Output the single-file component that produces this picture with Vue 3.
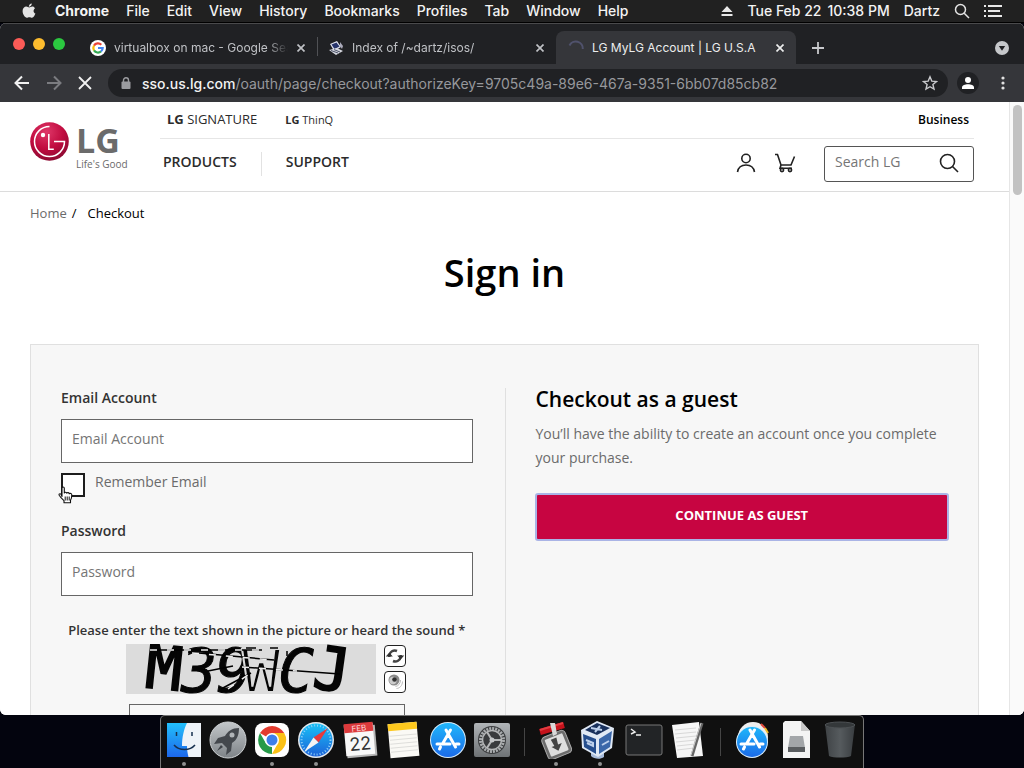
<script setup>
import { ref } from 'vue'

const menus = ['Chrome', 'File', 'Edit', 'View', 'History', 'Bookmarks', 'Profiles', 'Tab', 'Window', 'Help']
const tabs = [
  { title: 'virtualbox on mac - Google Search', icon: 'google', active: false },
  { title: 'Index of /~dartz/isos/', icon: 'debian', active: false },
  { title: 'LG MyLG Account | LG U.S.A', icon: 'spinner', active: true },
]
const dock = [
  { name: 'finder', running: true },
  { name: 'launchpad' },
  { name: 'chrome', running: true },
  { name: 'safari', running: true },
  { name: 'calendar' },
  { name: 'notes' },
  { name: 'appstore' },
  { name: 'preferences' },
  { name: 'sep' },
  { name: 'automator', running: true },
  { name: 'virtualbox', running: true },
  { name: 'terminal' },
  { name: 'textedit' },
  { name: 'sep' },
  { name: 'downloads' },
  { name: 'diskimage' },
  { name: 'trash' },
]
const email = ref('')
const password = ref('')
const captcha = ref('')
const query = ref('')
const remember = ref(false)
</script>

<template>
  <div class="desktop">
    <header class="menubar">
      <button class="apple" aria-label="Apple menu">
        <svg width="14" height="16" viewBox="0 0 14 16"><path fill="#e4e4e4" d="M9.8 0.4c.1 1.700-1.400 3.300-3 3.300C6.600 2.100 8.200.600 9.800.400zM12.900 5.400c-1.900 1.200-1.700 4.200.500 5.100-.500 1.500-1.900 4.300-3.400 4.300-1 0-1.400-.600-2.600-.600s-1.700.600-2.600.600C3 14.800.600 11.300.600 8.100c0-3 1.900-4.500 3.700-4.500 1.200 0 2.200.800 2.900.800.700 0 1.800-.900 3.200-.900 1 0 2 .600 2.500 1.900z"/></svg>
      </button>
      <button v-for="m in menus" :key="m" :class="{ app: m === 'Chrome' }">{{ m }}</button>
      <div class="status">
        <svg width="12" height="12" viewBox="0 0 12 12"><path fill="#e8e8e8" d="M6 1l5.500 6H.5zM.5 9h11v2H.5z"/></svg>
        <span class="clock"><span>Tue Feb 22</span><span>10:38 PM</span></span>
        <span>Dartz</span>
        <svg width="16" height="16" viewBox="0 0 16 16" fill="none" stroke="#e4e4e4" stroke-width="1.500"><circle cx="6.500" cy="6.500" r="5"/><path d="M10.200 10.200L15 15"/></svg>
        <svg width="18" height="12" viewBox="0 0 18 12" fill="#e8e8e8"><path d="M0 0h2v2H0zM0 5h2v2H0zM0 10h2v2H0zM4 0h14v2H4zM4 5h12v2H4zM4 10h14v2H4z"/></svg>
      </div>
    </header>

    <main class="window">
      <div class="tabstrip">
        <div class="lights"><i class="red"></i><i class="yellow"></i><i class="green"></i></div>
        <div v-for="t in tabs" :key="t.title" class="tab" :class="{ active: t.active }">
          <svg v-if="t.icon === 'google'" width="16" height="16" viewBox="0 0 16 16"><circle cx="8" cy="8" r="8" fill="#fff"/><g fill="none" stroke-width="2.200"><path d="M11.300 4.700A4.700 4.700 0 0 0 4 5.600" stroke="#ea4335"/><path d="M4 5.600a4.700 4.700 0 0 0 0 4.800" stroke="#fbbc05"/><path d="M4 10.400a4.700 4.700 0 0 0 7 1" stroke="#34a853"/><path d="M11 11.400A4.700 4.700 0 0 0 12.700 8H8" stroke="#4285f4"/></g></svg>
          <svg v-else-if="t.icon === 'debian'" width="16" height="16" viewBox="0 0 16 16"><path fill="#e2e4ef" d="M2 4l7-3 4 6-7 4z"/><path fill="#27346b" d="M3.500 4.500l5-2 3 4-5 2.500z"/><path fill="#d5d7df" d="M1 10l8-2 6 3-7 4z"/><path stroke="#4c5268" d="M3 10.500l7 2.500M6 9.600l6 2.400"/><path fill="#aab" d="M12 2l3 4-1 3-2-3z"/></svg>
          <svg v-else width="16" height="16" viewBox="0 0 16 16" fill="none" stroke="#50526c" stroke-width="2"><path d="M1.500 5.500A7 7 0 0 1 14.800 9"/></svg>
          <span class="title">{{ t.title }}</span>
          <button class="close" aria-label="Close tab"><svg width="8" height="8" viewBox="0 0 8 8" stroke="currentColor" stroke-width="1.700"><path d="M.5.500l7 7M7.500.500l-7 7"/></svg></button>
        </div>
        <button class="newtab" aria-label="New tab"><svg width="12" height="12" viewBox="0 0 12 12" stroke="#c8c9cc" stroke-width="1.800"><path d="M6 0v12M0 6h12"/></svg></button>
        <button class="tabsearch" aria-label="Search tabs"><svg width="14" height="14" viewBox="0 0 14 14"><circle cx="7" cy="7" r="7" fill="#c6c8cb"/><path fill="#202124" d="M3.800 5h6.400L7 9.800z"/></svg></button>
      </div>

      <div class="toolbar">
        <button aria-label="Back"><svg width="16" height="16" viewBox="0 0 16 16" fill="none" stroke="#f1f1f1" stroke-width="2"><path d="M15 8H2M8 1.500L1.500 8 8 14.500"/></svg></button>
        <button aria-label="Forward"><svg width="16" height="16" viewBox="0 0 16 16" fill="none" stroke="#7b7c80" stroke-width="2"><path d="M1 8h13M8 1.500L14.500 8 8 14.500"/></svg></button>
        <button aria-label="Stop"><svg width="14" height="14" viewBox="0 0 14 14" stroke="#f1f1f1" stroke-width="1.800"><path d="M1 1l12 12M13 1L1 13"/></svg></button>
        <div class="omnibox">
          <svg width="10" height="12" viewBox="0 0 10 12"><rect x="0.500" y="4.500" width="9" height="7.500" rx="1" fill="#9b9ca0"/><path d="M2.500 5V3.300a2.500 2.500 0 0 1 5 0V5" fill="none" stroke="#9b9ca0" stroke-width="1.400"/></svg>
          <span class="url"><b>sso.us.lg.com</b>/oauth/page/checkout?authorizeKey=9705c49a-89e6-467a-9351-6bb07d85cb82</span>
          <button aria-label="Bookmark this page"><svg width="16" height="16" viewBox="0 0 16 16" fill="none" stroke="#c8c9cc" stroke-width="1.400"><path d="M8 1.800l1.800 4.300 4.700.4-3.600 3 1.100 4.600L8 11.700l-4 2.400 1.100-4.600-3.600-3 4.700-.4z"/></svg></button>
        </div>
        <button class="profile" aria-label="Profile"><svg width="12" height="12" viewBox="0 0 12 12" fill="#fff"><circle cx="6" cy="3" r="3"/><path d="M0 12V10.500C0 8.500 3 7.300 6 7.300s6 1.200 6 3.200V12z"/></svg></button>
        <button class="more" aria-label="More"><svg width="4" height="14" viewBox="0 0 4 14" fill="#e2e2e2"><circle cx="2" cy="2" r="1.600"/><circle cx="2" cy="7" r="1.600"/><circle cx="2" cy="12" r="1.600"/></svg></button>
      </div>

      <div class="viewport">
        <div class="page">
          <div class="site-header">
            <a href="#" class="logo" aria-label="LG home">
              <svg width="39" height="39" viewBox="0 0 39 39"><defs><radialGradient id="lgface" cx="42%" cy="25%" r="80%"><stop offset="0" stop-color="#df3768"/><stop offset=".55" stop-color="#c00b3f"/><stop offset="1" stop-color="#850a30"/></radialGradient></defs><circle cx="19.500" cy="19.500" r="19.300" fill="url(#lgface)"/><g fill="none" stroke="#fff" stroke-width="1.500"><path d="M19.500 4.500A15 15 0 1 0 34.500 19.500H24"/><path d="M18.800 12v15.200h5"/></g><circle cx="13" cy="13" r="2.200" fill="#fff"/></svg>
              <span class="wordmark"><strong>LG</strong><small>Life's Good</small></span>
            </a>
            <div class="header-main">
              <div class="toprow">
                <a href="#" class="signature"><b>LG</b> SIGNATURE</a>
                <a href="#" class="thinq"><b>LG</b> ThinQ</a>
                <a href="#" class="business">Business</a>
              </div>
              <nav class="navrow">
                <a href="#">PRODUCTS</a>
                <a href="#" class="support">SUPPORT</a>
                <button class="account" aria-label="My account"><svg width="20" height="20" viewBox="0 0 20 20" fill="none" stroke="#222" stroke-width="1.600"><circle cx="10" cy="5.500" r="4.200"/><path d="M1.500 19c.8-4.700 4-7 8.500-7s7.700 2.300 8.500 7"/></svg></button>
                <button aria-label="Cart"><svg width="22" height="20" viewBox="0 0 22 20" fill="none" stroke="#222" stroke-width="1.600"><path d="M1 1.500h2.500L7 12h10l3.500-8.500M7 12l-1 3.200h12"/><circle cx="8" cy="17" r="1.600"/><circle cx="16" cy="17" r="1.600"/></svg></button>
                <div class="search">
                  <input v-model="query" type="text" placeholder="Search LG" aria-label="Search LG">
                  <button aria-label="Search"><svg width="20" height="20" viewBox="0 0 20 20" fill="none" stroke="#222" stroke-width="1.600"><circle cx="8.500" cy="8.500" r="7"/><path d="M13.500 13.500L19 19"/></svg></button>
                </div>
              </nav>
            </div>
          </div>

          <nav class="crumbs"><a href="#">Home</a><span>/</span><span class="here">Checkout</span></nav>
          <h1>Sign in</h1>

          <section class="panel">
            <form class="signin" @submit.prevent>
              <label class="field" for="email">Email Account</label>
              <input id="email" v-model="email" class="box" type="text" placeholder="Email Account">
              <div class="remember">
                <input id="remember" v-model="remember" type="checkbox">
                <label for="remember">Remember Email</label>
                <svg class="cursor" width="16" height="18" viewBox="0 0 16 18"><path fill="#fff" stroke="#111" stroke-width="1.100" stroke-linejoin="round" d="M4 10.500V2.200C4 .5 6.300.5 6.300 2.200V7c.5-1.200 2.400-1 2.500.2.600-1 2.300-.8 2.500.6.800-.8 2.500-.4 2.500 1.200 0 2.300-.3 3.500-1.300 5.200v2.600H6v-2.200C4.500 13 3 12 1.200 9.200.500 8 2 7.200 3 8.200z"/><path stroke="#111" d="M7.200 10.500v4M9.200 10.500v4M11.200 10.500v4"/></svg>
              </div>
              <label class="field" for="password">Password</label>
              <input id="password" v-model="password" class="box" type="password" placeholder="Password">
              <label class="captcha-label" for="captcha">Please enter the text shown in the picture or heard the sound *</label>
              <div class="captcha">
                <svg width="250" height="50" viewBox="0 0 250 50">
                  <rect width="250" height="50" fill="#dcdcdc"/>
                  <g font-family="DejaVu Sans Mono" font-size="60" fill="#050505" stroke="#050505" stroke-width="1">
                    <text x="20" y="45" transform="rotate(6 38 25)" stroke-width="2">M</text>
                    <text x="55" y="48" font-style="oblique">3</text>
                    <text x="90" y="48" font-style="oblique">9</text>
                    <text x="116" y="48" font-family="Liberation Mono" font-size="64" stroke="#dcdcdc" stroke-width="2">W</text>
                    <text x="152" y="48" font-style="oblique">C</text>
                    <text x="188" y="46" transform="rotate(8 205 25)" stroke-width="2">J</text>
                  </g>
                  <g fill="none" stroke-width="1.500"><path stroke="#000" d="M24 6h112M62 8l86 8M82 27l25-5M116 23l98 7M95 45l30-16M161 7v5M120 4h10M144 4h8"/><path stroke="#eee" stroke-dasharray="7 10" d="M24 6h112M66 9l80 7M116 23l55 4M102 45l24-17"/></g>
                </svg>
                <div class="captcha-tools">
                  <button aria-label="New picture"><svg width="20" height="20" viewBox="0 0 20 20"><g fill="none" stroke="#444" stroke-width="2.500"><path d="M4.300 11V9.500A5.500 5.500 0 0 1 12 5"/><path d="M15.700 9v1.500A5.500 5.500 0 0 1 8 15"/></g><path fill="#333" d="M.8 10.500h7l-3.500-4zM12.200 9.500h7l-3.500 4z"/></svg></button>
                  <button aria-label="Play sound"><svg width="20" height="20" viewBox="0 0 20 20"><circle cx="9" cy="8" r="5.500" fill="#8a8a8a"/><circle cx="8" cy="8.500" r="3.700" fill="#ccc"/><circle cx="9.500" cy="7.500" r="2.300" fill="#333"/><g fill="none" stroke="#bbb"><path d="M15.500 8c0 3.500-2 6-5 6.500M17.500 9.500c0 4-3 7-6 7"/></g></svg></button>
                </div>
              </div>
              <input id="captcha" v-model="captcha" class="box captcha-input" type="text">
            </form>
            <div class="guest">
              <h2>Checkout as a guest</h2>
              <p>You’ll have the ability to create an account once you complete your purchase.</p>
              <button>CONTINUE AS GUEST</button>
            </div>
          </section>
        </div>
        <div class="scrollbar"><i></i></div>
      </div>
    </main>

    <footer class="dock">
      <div v-for="(d, i) in dock" :key="i" :class="d.name === 'sep' ? 'sep' : 'cell'">
        <svg v-if="d.name === 'finder'" width="38" height="38" viewBox="0 0 38 38"><defs><linearGradient id="fin" x2="0" y2="1"><stop stop-color="#22c0fb"/><stop offset="1" stop-color="#1d67ea"/></linearGradient></defs><path fill="url(#fin)" d="M2 2h34v34H2z"/><path fill="#eef3f8" d="M22 2h14v34H23.500c-1-4-1.500-7-1.500-11h-5c0-9 2-17 5-23z"/><g fill="none" stroke="#17304f" stroke-width="1.500"><path d="M11.500 11v4M27 11v4M9 24c5 6 16 6 21 0"/></g></svg>
        <svg v-else-if="d.name === 'launchpad'" width="38" height="38" viewBox="0 0 38 38"><defs><linearGradient id="lp" x2="0" y2="1"><stop stop-color="#c3c7ca"/><stop offset="1" stop-color="#7e8387"/></linearGradient></defs><circle cx="19" cy="19" r="18" fill="url(#lp)" stroke="#cdd0d2"/><path fill="#44484d" d="M30 7c-7 0-11 3-14 8l-7 2-4 6 8-1 5 5-1 7 5-4 1-8c5-3 7-8 7-15z"/><circle cx="23" cy="14" r="2.500" fill="#b1b5b8"/><path fill="#3d4146" d="M12 24l-4 6 6-4z"/></svg>
        <svg v-else-if="d.name === 'chrome'" width="38" height="38" viewBox="0 0 38 38"><rect x="2" y="2" width="34" height="34" rx="8" fill="#fff"/><path fill="#e33b2e" d="M19 19L7 12a14 14 0 0 1 24.200 0z"/><path fill="#fbc116" d="M19 12h12.200A14 14 0 0 1 19 33l6-11z"/><path fill="#269a49" d="M7 12l6 10.500L19 26v7A14 14 0 0 1 7 12z"/><circle cx="19" cy="19" r="7" fill="#fff"/><circle cx="19" cy="19" r="5.500" fill="#3e7fea"/></svg>
        <svg v-else-if="d.name === 'safari'" width="38" height="38" viewBox="0 0 38 38"><defs><linearGradient id="sf" x2="0" y2="1"><stop stop-color="#19c1f7"/><stop offset="1" stop-color="#1c62d8"/></linearGradient></defs><circle cx="19" cy="19" r="18" fill="#e5e9ed"/><circle cx="19" cy="19" r="16.500" fill="url(#sf)"/><circle cx="19" cy="19" r="14.500" fill="none" stroke="#8fd0f8" stroke-width="2" stroke-dasharray="1 2"/><path fill="#e8393c" d="M31 7L21.500 21.500l-5-5z"/><path fill="#f4f4f4" d="M7 31l9.500-14.500 5 5z"/></svg>
        <svg v-else-if="d.name === 'calendar'" width="38" height="38" viewBox="0 0 38 38"><g transform="rotate(-5 19 19)"><path fill="#b5b5b5" d="M5 5h30v31H5z"/><path fill="#f8f8f8" d="M4 3h29v31H4z"/><path fill="#dc3a3c" d="M4 2h29v9H4z"/><text x="19" y="10" font-size="8" fill="#fbdcdc" text-anchor="middle" font-family="Inter">FEB</text><text x="19" y="29" font-size="18" fill="#333" text-anchor="middle" font-family="Inter">22</text></g></svg>
        <svg v-else-if="d.name === 'notes'" width="38" height="38" viewBox="0 0 38 38"><g transform="rotate(-5 19 19)"><path fill="#faf9f5" d="M4 2h29v34H4z"/><path fill="#fdc81e" d="M4 2h29v7H4z"/><path stroke="#dededb" d="M5 14h27M5 18h27M5 22h27M5 26h27M5 30h27"/></g></svg>
        <svg v-else-if="d.name === 'appstore' || d.name === 'downloads'" width="38" height="38" viewBox="0 0 38 38"><defs><linearGradient id="as" x2="0" y2="1"><stop stop-color="#20b7fa"/><stop offset="1" stop-color="#1b6be9"/></linearGradient></defs><g v-if="d.name === 'downloads'"><circle cx="20" cy="16" r="15" fill="#eee"/><path stroke="#e34a3c" stroke-width="2" d="M28 3l4 4"/><path stroke="#f0bd2a" stroke-width="2" d="M32 7l3 5"/></g><circle cx="19" :cy="d.name === 'downloads' ? 21 : 19" :r="d.name === 'downloads' ? 16 : 18" fill="#d9edfb"/><circle cx="19" :cy="d.name === 'downloads' ? 21 : 19" :r="d.name === 'downloads' ? 15 : 17" fill="url(#as)"/><path fill="none" stroke="#fff" stroke-width="3" stroke-linecap="round" d="M17 9l9.500 17M21.500 9L14 22M11.500 26l-1 2M8 23h13M27 23h3"/></svg>
        <svg v-else-if="d.name === 'preferences'" width="38" height="38" viewBox="0 0 38 38"><defs><linearGradient id="pf" x2="0" y2="1"><stop stop-color="#b1b5b8"/><stop offset="1" stop-color="#6e7275"/></linearGradient></defs><rect x="1" y="2" width="36" height="34" rx="2" fill="url(#pf)"/><circle cx="19" cy="19" r="14" fill="#3b3d3f"/><circle cx="19" cy="19" r="11.500" fill="none" stroke="#a8abad" stroke-width="3" stroke-dasharray="2 1"/><circle cx="19" cy="19" r="9.500" fill="#393b3d" stroke="#b5b7b8" stroke-width="1.500"/><path fill="none" stroke="#b5b7b8" stroke-width="2" d="M19 19h9M19 19l-5-8M19 19l-5 8"/><circle cx="19" cy="19" r="2.500" fill="#c4c6c8"/></svg>
        <svg v-else-if="d.name === 'automator'" width="38" height="38" viewBox="0 0 38 38"><g transform="rotate(-22 19 21)"><rect x="6" y="12" width="25" height="24" rx="4" fill="#6c6c6c" stroke="#aaa"/><rect x="9" y="15" width="19" height="18" rx="1" fill="#dedede"/><path fill="#444" d="M15 17h6l-1 7h4l-6 6-5-6h3z"/></g><path stroke="#c5121b" stroke-width="6" d="M3 11L27 4"/><path stroke="#e33c41" stroke-width="2" d="M3 9L26 2"/><path fill="#d8d8d8" d="M13 2h5l2 11-4 2z"/></svg>
        <svg v-else-if="d.name === 'virtualbox'" width="38" height="38" viewBox="0 0 38 38"><path fill="#a8bcdb" d="M10 29h13v7c-4 3-10 2-13-1z"/><path fill="#e0e9f5" d="M16 0l17 7-2 20-14 9L1 27 0 9z"/><path fill="#18305c" d="M16 2l13 5-13 7L4 9z"/><path fill="#254e8e" d="M2 13l13 5v15L3 26z"/><path fill="#3b68aa" d="M18 18l13-8-2 16-11 7z"/><path stroke="#bed1ec" stroke-width="2" fill="none" d="M10 7l11 2M19 5l-5 6M5 19l7 3v3l-6-3M21 24l7-4"/></svg>
        <svg v-else-if="d.name === 'terminal'" width="38" height="38" viewBox="0 0 38 38"><rect x="1" y="4" width="36" height="30" rx="2" fill="#222426" stroke="#777"/><path stroke="#eee" stroke-width="1.500" fill="none" d="M6 8l4 3-4 2M11 14h5"/></svg>
        <svg v-else-if="d.name === 'textedit'" width="38" height="38" viewBox="0 0 38 38"><path fill="#f6f6f6" d="M3 4l27-3 4 34-26 2z"/><path stroke="#d8d8d8" d="M6 9l21-2M6 13l21-2M7 17l20-2M7 21l20-2M8 25l18-2M8 29l17-2"/><path stroke="#666" stroke-width="3" d="M33 2L23 35"/><path stroke="#ccc" d="M32 2L22 34"/></svg>
        <svg v-else-if="d.name === 'diskimage'" width="38" height="38" viewBox="0 0 38 38"><path fill="#f4f4f4" d="M8 0h16l9 10v27H6V2z"/><path fill="#c9c9c9" d="M24 0v10h9z"/><path fill="#a3a6a9" d="M13 15h13l2 12H11z"/><path fill="#5a5d60" d="M11 26h17v5H11z"/></svg>
        <svg v-else-if="d.name === 'trash'" width="38" height="38" viewBox="0 0 38 38"><defs><linearGradient id="tr"><stop stop-color="#3f4346"/><stop offset=".5" stop-color="#565b5e"/><stop offset="1" stop-color="#393d40"/></linearGradient></defs><path fill="url(#tr)" d="M4 3h30l-4 32c-4 2-18 2-22 0z"/><ellipse cx="19" cy="4" rx="15" ry="3" fill="#34383a" stroke="#4d5154"/></svg>
        <i v-if="d.running" class="dot"></i>
      </div>
    </footer>
  </div>
</template>

<style>
body { margin: 0; background: #03040e; }
</style>

<style scoped>
* { box-sizing: border-box; }
button { border: 0; padding: 0; background: none; color: inherit; font: inherit; display: flex; align-items: center; justify-content: center; }
a { color: inherit; text-decoration: none; }
svg { flex: none; display: block; }
.desktop { height: 100vh; min-height: 400px; display: flex; flex-direction: column; overflow: hidden; background: #03040e; font-family: Inter, "Liberation Sans", sans-serif; }
.menubar { flex: none; height: 23px; padding: 0 22px 1px 20px; display: flex; align-items: center; gap: 17px; background: #212121; border-bottom: 1px solid #000; color: #f3f3f3; font-size: 14px; font-weight: 500; white-space: nowrap; }
.apple { width: 18px; }
.app { font-weight: 700; }
.status { margin-left: auto; display: flex; align-items: center; gap: 14px; }
.clock { display: flex; gap: 6px; }
.window { flex: 1; min-height: 0; display: flex; flex-direction: column; overflow: hidden; border-radius: 6px; background: #fff; }
.tabstrip { flex: none; height: 41px; padding: 7px 15px 0 13px; display: flex; align-items: stretch; background: #202124; border-top: 1px solid #4a4a4c; color: #bfc1c5; font-size: 12px; }
.lights { width: 67px; padding-top: 7px; display: flex; gap: 8px; }
.lights i { width: 12px; height: 12px; border-radius: 50%; }
.red { background: #fc5b57; }
.yellow { background: #fdbc2e; }
.green { background: #2bc840; }
.tab { flex: 0 1 238px; min-width: 0; padding: 0 11px 0 10px; display: flex; align-items: center; gap: 8px; }
.tab:nth-child(2) { border-right: 1px solid #202124; border-image: linear-gradient(#202124 20%, #505155 20%, #505155 75%, #202124 75%) 1; }
.tab.active { flex-basis: 240px; padding: 0 11px 0 12px; background: #35363a; border-radius: 8px 8px 0 0; color: #eceded; }
.title { flex: 1; min-width: 0; overflow: hidden; white-space: nowrap; mask-image: linear-gradient(90deg, #000 88%, transparent); }
.active .title { mask-image: none; }
.close { width: 10px; }
.newtab { width: 44px; }
.tabsearch { margin-left: auto; }
.toolbar { flex: none; height: 38px; padding: 0 13px 0 14px; display: flex; align-items: center; gap: 16px; background: #35363a; }
.omnibox { flex: 1; min-width: 0; height: 28px; margin-right: -7px; padding: 0 10px 0 13px; display: flex; align-items: center; gap: 11px; background: #202124; border-radius: 14px; color: #97989c; font-size: 14px; }
.url { flex: 1; min-width: 0; overflow: hidden; white-space: nowrap; }
.url b { color: #f2f2f2; font-weight: 500; }
.profile { width: 22px; height: 22px; border-radius: 50%; background: #202124; }
.more { width: 16px; }

.viewport { flex: 1; min-height: 0; display: flex; overflow: hidden; background: #fff; font-family: "Open Sans", "Noto Sans", sans-serif; }
.page { flex: 1; min-width: 0; color: #2b2b2b; }
.scrollbar { flex: none; width: 15px; padding: 3px 2px; background: #fafafa; border-left: 1px solid #e6e6e6; }
.scrollbar i { display: block; width: 9px; height: 90px; margin: auto; border-radius: 5px; background: #c2c2c2; }
.site-header { display: flex; padding: 0 35px 0 30px; border-bottom: 1px solid #dcdcdc; }
.logo { width: 130px; padding-top: 20px; display: flex; gap: 7px; }
.wordmark { display: flex; flex-direction: column; color: #6b6b6b; white-space: nowrap; }
.wordmark strong { font-size: 34px; line-height: 36px; }
.wordmark small { font-size: 10px; line-height: 12px; }
.header-main { flex: 1; min-width: 0; }
.toprow { height: 37px; padding: 0 5px 2px 7px; display: flex; align-items: center; gap: 28px; border-bottom: 1px solid #e6e6e6; font-size: 11px; }
.signature { font-size: 13px; }
.business { margin-left: auto; color: #000; font-size: 12px; font-weight: 600; }
.navrow { height: 52px; padding: 0 0 2px 3px; display: flex; align-items: center; font-size: 14px; font-weight: 600; }
.navrow > a { padding-bottom: 5px; }
.support { margin-left: 24px; padding-left: 24px; border-left: 1px solid #e2e2e2; }
.account { margin-left: auto; margin-right: 18px; }
.account, .account + button { padding-bottom: 2px; }
.search { width: 150px; height: 36px; margin-left: 28px; padding: 0 14px 0 10px; display: flex; align-items: center; border: 1px solid #555; border-radius: 3px; }
.search button { padding-bottom: 2px; }
input { border: 0; margin: 0; outline: 0; background: #fff; font-family: inherit; color: #333; }
input::placeholder { color: #757575; opacity: 1; }
.search input { flex: 1; width: 0; min-width: 0; padding: 0 0 5px; font-size: 14px; }
.crumbs { padding: 11px 30px 0; display: flex; font-size: 13px; line-height: 20px; color: #000; }
.crumbs a { color: #6b6b6b; margin-right: 5px; }
.here { margin-left: 11px; }
h1 { margin: 21px 0 44px; text-align: center; font-size: 38px; line-height: 56px; font-weight: 600; color: #000; }
.panel { margin: 0 30px; padding: 43px 30px 60px; display: grid; grid-template-columns: 1fr 1fr; background: #f7f7f7; border: 1px solid #e0e0e0; }
.signin { padding-right: 32px; display: flex; flex-direction: column; }
.guest { padding-left: 30px; border-left: 1px solid #e0e0e0; }
.field { font-size: 14px; line-height: 20px; font-weight: 600; color: #333; }
.box { height: 44px; margin-top: 11px; padding: 0 10px 6px; border: 1px solid #666; font-size: 14px; }
.remember { position: relative; height: 24px; margin: 10px 0 24px; display: flex; gap: 10px; font-size: 14px; line-height: 18px; color: #6b6b6b; }
.remember input { appearance: none; width: 24px; height: 24px; border: 2px solid #1d1d1d; }
.cursor { position: absolute; left: -3px; top: 13px; }
.captcha-label { margin-top: 24px; text-align: center; font-size: 13px; line-height: 20px; font-weight: 600; color: #333; white-space: nowrap; }
.captcha { margin-top: 4px; padding-right: 2px; display: flex; justify-content: center; gap: 8px; }
.captcha-tools { display: flex; flex-direction: column; gap: 4px; padding-top: 1px; }
.captcha-tools button { width: 22px; height: 22px; border: 1px solid #222; border-radius: 4px; background: #fff; }
.captcha-input { align-self: center; width: 276px; margin-top: 10px; background: #f7f7f7; }
h2 { margin: 0; font-size: 21px; line-height: 22px; font-weight: 600; color: #000; }
p { margin: 12px 0 24px; font-size: 14px; line-height: 24px; color: #6b6b6b; }
.guest button { width: 100%; height: 46px; padding-bottom: 5px; background: #c70541; border-radius: 2px; outline: 2px solid #aab4e6; outline-offset: -1px; color: #fff; font-size: 13px; font-weight: 700; }

.dock { flex: none; height: 53px; align-self: center; padding: 0 1px; display: flex; background: #101010; border: 1px solid #777; border-bottom: 0; border-radius: 5px 5px 0 0; }
.cell { width: 44px; padding-top: 5px; display: flex; flex-direction: column; align-items: center; gap: 3px; }
.sep { width: 20px; padding: 12px 0; display: flex; justify-content: center; }
.sep::before { content: ""; width: 1px; background: #454545; }
.dot { width: 4px; height: 4px; border-radius: 50%; background: #909090; }
</style>
